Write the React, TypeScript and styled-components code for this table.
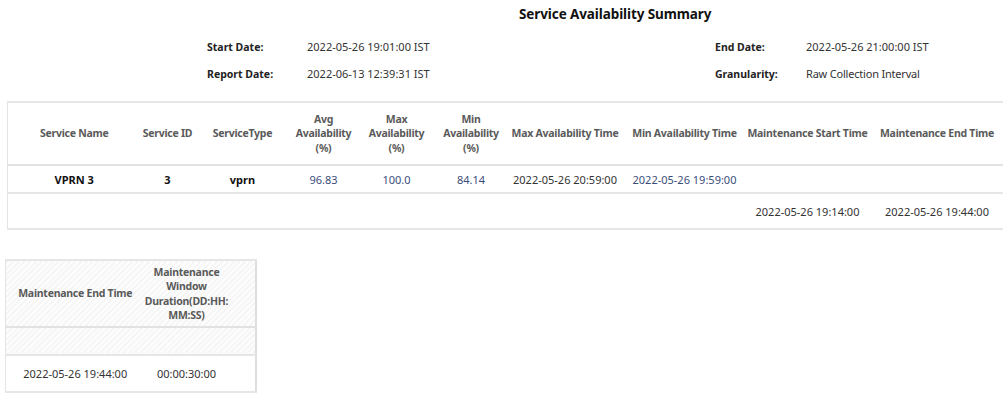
import styled, { createGlobalStyle } from 'styled-components';

const GlobalStyle = createGlobalStyle`
  html, body {
    margin: 0;
    padding: 0;
    background: #ffffff;
  }
  body {
    font-family: 'Noto Sans', 'Open Sans', Arial, sans-serif;
    color: #333333;
  }
`;

const Page = styled.div`
  width: 1003px;
  height: 398px;
  overflow: hidden;
  box-sizing: border-box;
  padding: 4px 0 0 7px;
`;

const Title = styled.h1`
  margin: 0;
  height: 20px;
  padding-left: 512px;
  font-size: 13.5px;
  letter-spacing: -0.1px;
  line-height: 20px;
  font-weight: 700;
  color: #111111;
`;

const MetaGrid = styled.div`
  display: grid;
  grid-template-columns: 100px 408px 91px 200px;
  grid-auto-rows: 27px;
  padding: 9px 0 0 200px;
  align-items: center;
  font-size: 11px;
`;

const MetaLabel = styled.span`
  font-weight: 700;
  font-size: 10.5px;
  color: #222222;
`;

const MetaValue = styled.span<{ $narrow?: boolean }>`
  color: #333333;
  letter-spacing: ${(p) => (p.$narrow ? '-0.2px' : '0')};
`;

const Table = styled.table`
  border-collapse: collapse;
  table-layout: fixed;
  font-size: 11px;
`;

const SummaryTable = styled(Table)`
  width: 996px;
  margin-top: 14px;
  border-left: 1px solid #e4e4e4;
`;

const MaintTable = styled(Table)`
  width: 250px;
  margin-top: 29px;
  margin-left: -2px;
  border-left: 1px solid #e4e4e4;
  border-right: 2px solid #dedede;
`;

const hatch = 'repeating-linear-gradient(135deg, #f6f6f6 0 2px, #fdfdfd 2px 4px)';

const HeadRow = styled.tr<{ $h: number; $hatched?: boolean }>`
  height: ${(p) => p.$h}px;
  border-top: 2px solid #e6e6e6;
  border-bottom: 2px solid #e2e2e2;
  background: ${(p) => (p.$hatched ? hatch : '#ffffff')};
`;

const BodyRow = styled.tr<{ $h: number; $hatched?: boolean }>`
  height: ${(p) => p.$h}px;
  border-bottom: 2px solid #e6e6e6;
  background: ${(p) => (p.$hatched ? hatch : '#ffffff')};
`;

const Th = styled.th<{ $pr?: number }>`
  padding: 0 ${(p) => p.$pr ?? 0}px 0 0;
  text-align: center;
  vertical-align: middle;
  font-size: 10.5px;
  letter-spacing: -0.25px;
  font-weight: 700;
  color: #5a5a5a;
  line-height: 14.5px;
  white-space: nowrap;
`;

const Td = styled.td<{ $tone?: 'bold' | 'blue' | 'plain'; $pr?: number }>`
  padding: 0 ${(p) => p.$pr ?? 0}px 0 0;
  text-align: center;
  vertical-align: middle;
  white-space: nowrap;
  font-weight: ${(p) => (p.$tone === 'bold' ? 700 : 400)};
  color: ${(p) =>
    p.$tone === 'bold' ? '#111111' : p.$tone === 'blue' ? '#3b4e7a' : '#333333'};
`;

const summaryCols = [133, 54, 96, 66, 80, 69, 119, 120, 126, 133];

export default function App() {
  return (
    <Page>
      <GlobalStyle />
      <Title>Service Availability Summary</Title>
      <MetaGrid>
        <MetaLabel>Start Date:</MetaLabel>
        <MetaValue>2022-05-26 19:01:00 IST</MetaValue>
        <MetaLabel>End Date:</MetaLabel>
        <MetaValue>2022-05-26 21:00:00 IST</MetaValue>
        <MetaLabel>Report Date:</MetaLabel>
        <MetaValue>2022-06-13 12:39:31 IST</MetaValue>
        <MetaLabel>Granularity:</MetaLabel>
        <MetaValue $narrow>Raw Collection Interval</MetaValue>
      </MetaGrid>

      <SummaryTable>
        <colgroup>
          {summaryCols.map((w, i) => (
            <col key={i} style={{ width: w }} />
          ))}
        </colgroup>
        <thead>
          <HeadRow $h={63}>
            <Th>Service Name</Th>
            <Th>Service ID</Th>
            <Th>ServiceType</Th>
            <Th>Avg<br />Availability<br />(%)</Th>
            <Th>Max<br />Availability<br />(%)</Th>
            <Th>Min<br />Availability<br />(%)</Th>
            <Th>Max Availability Time</Th>
            <Th>Min Availability Time</Th>
            <Th>Maintenance Start Time</Th>
            <Th>Maintenance End Time</Th>
          </HeadRow>
        </thead>
        <tbody>
          <BodyRow $h={28}>
            <Td $tone="bold">VPRN 3</Td>
            <Td $tone="bold">3</Td>
            <Td $tone="bold">vprn</Td>
            <Td $tone="blue">96.83</Td>
            <Td $tone="blue">100.0</Td>
            <Td $tone="blue">84.14</Td>
            <Td>2022-05-26 20:59:00</Td>
            <Td $tone="blue">2022-05-26 19:59:00</Td>
            <Td />
            <Td />
          </BodyRow>
          <BodyRow $h={36}>
            <Td />
            <Td />
            <Td />
            <Td />
            <Td />
            <Td />
            <Td />
            <Td />
            <Td>2022-05-26 19:14:00</Td>
            <Td>2022-05-26 19:44:00</Td>
          </BodyRow>
        </tbody>
      </SummaryTable>

      <MaintTable>
        <colgroup>
          <col style={{ width: 139 }} />
          <col style={{ width: 111 }} />
        </colgroup>
        <thead>
          <HeadRow $h={67} $hatched>
            <Th>Maintenance End Time</Th>
            <Th $pr={26}>Maintenance<br />Window<br />Duration(DD:HH:<br />MM:SS)</Th>
          </HeadRow>
        </thead>
        <tbody>
          <BodyRow $h={28} $hatched>
            <Td />
            <Td />
          </BodyRow>
          <BodyRow $h={37}>
            <Td>2022-05-26 19:44:00</Td>
            <Td $pr={26}>00:00:30:00</Td>
          </BodyRow>
        </tbody>
      </MaintTable>
    </Page>
  );
}
